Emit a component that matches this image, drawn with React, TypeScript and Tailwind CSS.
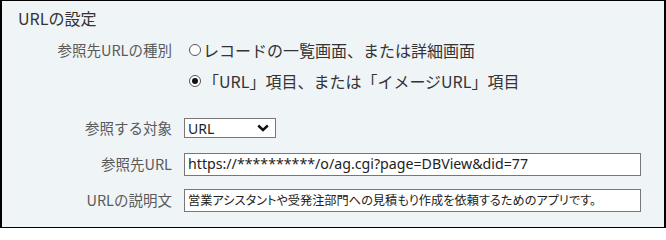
import { useState } from 'react'

const font = "font-['Noto_Sans','Noto_Sans_CJK_JP',sans-serif]"
const cjk = "font-['Noto_Sans_CJK_JP',sans-serif]"

function Radio({ checked }: { checked: boolean }) {
  return (
    <span className="flex h-[12px] w-[12px] shrink-0 items-center justify-center rounded-full border border-[#555] bg-white">
      {checked && <span className="h-[6px] w-[6px] rounded-full bg-[#111]" />}
    </span>
  )
}

function Label({ children }: { children: React.ReactNode }) {
  return (
    <div className={`w-[170px] shrink-0 text-right text-[14.5px] text-[#5a5a5a] ${cjk}`}>
      {children}
    </div>
  )
}

export default function App() {
  const [kind, setKind] = useState<'list' | 'url'>('url')

  return (
    <div className={`flex h-[228px] w-[666px] flex-col border-x-2 border-y border-black bg-[#eff4f7] ${cjk}`}>
      <div className="flex h-[33px] items-center pl-[16px] text-[16px] leading-none text-[#333]">
        URLの設定
      </div>

      <div className="flex h-[32px] items-center">
        <Label>参照先URLの種別</Label>
        <button
          onClick={() => setKind('list')}
          className="ml-[17px] flex items-center gap-[2px] text-[16px] text-[#333]"
        >
          <Radio checked={kind === 'list'} />
          レコードの一覧画面、または詳細画面
        </button>
      </div>

      <div className="flex h-[30px] items-center">
        <div className="w-[170px] shrink-0" />
        <button
          onClick={() => setKind('url')}
          className="ml-[17px] flex items-center gap-[2px] text-[16px] text-[#333]"
        >
          <Radio checked={kind === 'url'} />
          「URL」項目、または「イメージURL」項目
        </button>
      </div>

      <div className="mt-[20px] flex h-[24px] items-center">
        <Label>参照する対象</Label>
        <div className="ml-[12px] flex h-[20px] w-[92px] items-center justify-between border border-[#777] bg-white pl-[3px] pr-[6px]">
          <span className={`text-[14px] text-[#222] ${font}`}>URL</span>
          <svg width="12" height="8" viewBox="0 0 12 8" fill="none">
            <polyline points="1.2,1.5 6,6 10.8,1.5" stroke="#111" strokeWidth="2.4" />
          </svg>
        </div>
      </div>

      <div className="mt-[12px] flex h-[24px] items-center">
        <Label>参照先URL</Label>
        <div className={`ml-[12px] flex h-[23px] w-[457px] items-center border border-[#777] bg-white pl-[3px] text-[14.2px] text-[#222] ${font}`}>
          https://**********/o/ag.cgi?page=DBView&amp;did=77
        </div>
      </div>

      <div className="mt-[12px] flex h-[24px] items-center">
        <Label>URLの説明文</Label>
        <div className="ml-[12px] flex h-[23px] w-[457px] items-center border border-[#777] bg-white pl-[3px] text-[12.2px] text-[#222] [font-feature-settings:'palt']">
          営業アシスタントや受発注部門への見積もり作成を依頼するためのアプリです。
        </div>
      </div>
    </div>
  )
}
